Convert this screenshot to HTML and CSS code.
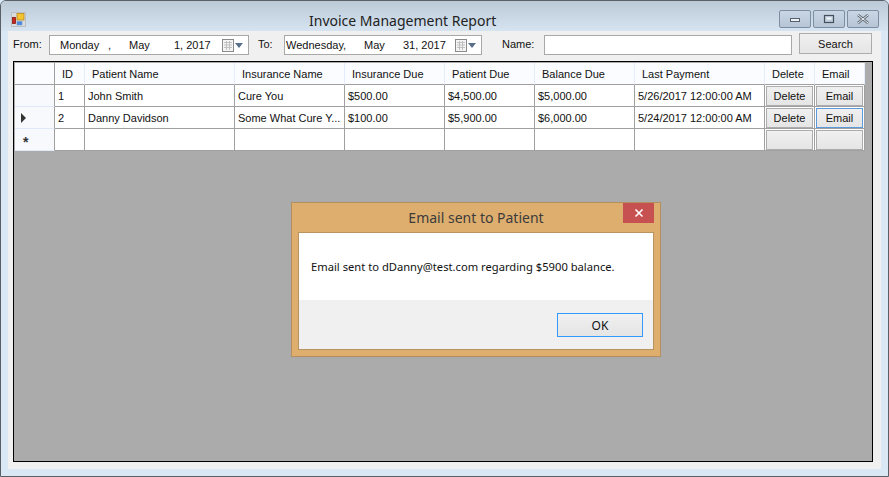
FILE: index.html
```html
<!DOCTYPE html>
<html lang="en">
<head>
    <meta charset="UTF-8">
    <title>Invoice Management Report</title>
    <link rel="stylesheet" href="styles.css">
</head>
<body>
    <div class="window">
        <div class="titlebar">
            <svg class="app-icon" width="15" height="15" viewBox="0 0 15 15">
                <rect x="0.5" y="0.5" width="14" height="14" fill="#d8dcdf" stroke="#bcc0c2"/>
                <rect x="1.5" y="5.5" width="3" height="6" fill="#c8261c" stroke="#8c1a14" stroke-width="0.8"/>
                <rect x="6" y="1.5" width="7" height="6.5" fill="#f4c430" stroke="#b88a18" stroke-width="0.8"/>
                <rect x="6" y="9.5" width="5" height="3.5" fill="#4a86dc" stroke="#6f9bd8" stroke-width="0.6"/>
            </svg>
            <div class="title">Invoice Management Report</div>
            <div class="caption-buttons">
                <div class="caption-btn">
                    <svg width="14" height="8" viewBox="0 0 14 8"><rect x="2.5" y="3.5" width="9" height="3" fill="#eef2f6" stroke="#56606c"/></svg>
                </div>
                <div class="caption-btn">
                    <svg width="12" height="10" viewBox="0 0 12 10"><rect x="1.5" y="1.5" width="9" height="7" fill="none" stroke="#46505c" stroke-width="1.2"/><rect x="3.5" y="3.5" width="5" height="2" fill="#f4f7fa"/></svg>
                </div>
                <div class="caption-btn caption-close">
                    <svg width="14" height="10" viewBox="0 0 14 10"><path d="M2 1 L12 9 M12 1 L2 9" stroke="#5c6670" stroke-width="2.6" fill="none"/><path d="M2 1 L12 9 M12 1 L2 9" stroke="#eef2f6" stroke-width="1" fill="none"/></svg>
                </div>
            </div>
        </div>

        <div class="client">
            <div class="toolbar">
                <label class="lbl lbl-from">From:</label>
                <div class="date-picker date-from">
                    <span class="dp-day">Monday</span>
                    <span class="dp-comma">,</span>
                    <span class="dp-month">May</span>
                    <span class="dp-year">1, 2017</span>
                    <svg class="cal" width="22" height="14" viewBox="0 0 22 14">
                        <rect x="0.5" y="0.5" width="11" height="12" fill="#f4f4f4" stroke="#8a8a8a"/>
                        <path d="M2 3.5H10M2 6H10M2 8.5H10M4.5 2V11M7.5 2V11" stroke="#c0c0c0" stroke-width="1" fill="none"/>
                        <path d="M13 4H21L17 9Z" fill="#5a6f8c"/>
                    </svg>
                </div>
                <label class="lbl lbl-to">To:</label>
                <div class="date-picker date-to">
                    <span class="dp-day">Wednesday,</span>
                    <span class="dp-month">May</span>
                    <span class="dp-year">31, 2017</span>
                    <svg class="cal" width="22" height="14" viewBox="0 0 22 14">
                        <rect x="0.5" y="0.5" width="11" height="12" fill="#f4f4f4" stroke="#8a8a8a"/>
                        <path d="M2 3.5H10M2 6H10M2 8.5H10M4.5 2V11M7.5 2V11" stroke="#c0c0c0" stroke-width="1" fill="none"/>
                        <path d="M13 4H21L17 9Z" fill="#5a6f8c"/>
                    </svg>
                </div>
                <label class="lbl lbl-name">Name:</label>
                <input class="name-input" type="text">
                <button class="btn search-btn" type="button">Search</button>
            </div>

            <div class="grid-view">
                <div class="grid-table">
                    <div class="row head-row">
                        <div class="row-head"></div>
                        <div class="cell">ID</div>
                        <div class="cell">Patient Name</div>
                        <div class="cell">Insurance Name</div>
                        <div class="cell">Insurance Due</div>
                        <div class="cell">Patient Due</div>
                        <div class="cell">Balance Due</div>
                        <div class="cell">Last Payment</div>
                        <div class="cell">Delete</div>
                        <div class="cell">Email</div>
                    </div>
                    <div class="row">
                        <div class="row-head"></div>
                        <div class="cell">1</div>
                        <div class="cell">John Smith</div>
                        <div class="cell">Cure You</div>
                        <div class="cell">$500.00</div>
                        <div class="cell">$4,500.00</div>
                        <div class="cell">$5,000.00</div>
                        <div class="cell">5/26/2017 12:00:00 AM</div>
                        <div class="cell btn-cell"><button class="btn" type="button">Delete</button></div>
                        <div class="cell btn-cell"><button class="btn" type="button">Email</button></div>
                    </div>
                    <div class="row">
                        <div class="row-head"><span class="arrow"></span></div>
                        <div class="cell">2</div>
                        <div class="cell">Danny Davidson</div>
                        <div class="cell">Some What Cure Y...</div>
                        <div class="cell">$100.00</div>
                        <div class="cell">$5,900.00</div>
                        <div class="cell">$6,000.00</div>
                        <div class="cell">5/24/2017 12:00:00 AM</div>
                        <div class="cell btn-cell"><button class="btn" type="button">Delete</button></div>
                        <div class="cell btn-cell"><button class="btn btn-focus" type="button">Email</button></div>
                    </div>
                    <div class="row">
                        <div class="row-head"><span class="star">*</span></div>
                        <div class="cell"></div>
                        <div class="cell"></div>
                        <div class="cell"></div>
                        <div class="cell"></div>
                        <div class="cell"></div>
                        <div class="cell"></div>
                        <div class="cell"></div>
                        <div class="cell btn-cell"><button class="btn" type="button"></button></div>
                        <div class="cell btn-cell"><button class="btn" type="button"></button></div>
                    </div>
                </div>
            </div>
        </div>

        <div class="dialog">
            <div class="dialog-title">
                <span>Email sent to Patient</span>
                <div class="dialog-close">
                    <svg width="10" height="10" viewBox="0 0 10 10"><path d="M1.5 1.5 L8.5 8.5 M8.5 1.5 L1.5 8.5" stroke="#fff" stroke-width="1.6" fill="none"/></svg>
                </div>
            </div>
            <div class="dialog-inner">
                <div class="dialog-msg">Email sent to dDanny@test.com regarding $5900 balance.</div>
                <div class="dialog-foot">
                    <button class="ok-btn" type="button">OK</button>
                </div>
            </div>
        </div>
    </div>
</body>
</html>
```

FILE: styles.css
```css
* {
    box-sizing: border-box;
    margin: 0;
    padding: 0;
}
html, body {
    width: 889px;
    height: 477px;
    overflow: hidden;
}
body {
    font-family: 'Liberation Sans', Arial, sans-serif;
    font-size: 11px;
    color: #111;
    background: #dae8f5;
}
.window {
    position: relative;
    width: 889px;
    height: 477px;
    display: flex;
    flex-direction: column;
    border: 1px solid #5a5f66;
    border-radius: 6px 6px 0 0;
    background: #dae8f5;
    padding: 0 7px 7px 7px;
}
.titlebar {
    height: 30px;
    margin: 0 -7px;
    padding: 0 9px 0 10px;
    display: flex;
    align-items: flex-start;
    background: linear-gradient(to bottom, #bccad8, #d6e4f2);
    border-radius: 5px 5px 0 0;
}
.app-icon {
    margin-top: 11px;
}
.title {
    position: absolute;
    left: 308px;
    top: 10px;
    font-family: 'Noto Sans', sans-serif;
    font-size: 14px;
    line-height: 20px;
    color: #222;
}
.caption-buttons {
    margin-left: auto;
    margin-top: 9px;
    display: flex;
    gap: 2px;
}
.caption-btn {
    width: 32px;
    height: 18px;
    border: 1px solid #7d8ea3;
    border-radius: 2px;
    background: linear-gradient(to bottom, #c9d6e4, #b6c5d6);
    display: flex;
    align-items: center;
    justify-content: center;
}
.client {
    flex: 1;
    display: flex;
    flex-direction: column;
    background: #f0f0f0;
    padding: 0 8px 7px 5px;
}
.toolbar {
    height: 30px;
    display: flex;
    align-items: flex-start;
    padding-top: 4px;
}
.lbl {
    line-height: 19px;
}
.lbl-from {
    width: 36px;
}
.lbl-to {
    margin-left: 9px;
    width: 26px;
}
.lbl-name {
    margin-left: 20px;
    width: 42px;
}
.date-picker {
    height: 20px;
    background: #fff;
    border: 1px solid #a8a8a8;
    line-height: 18px;
    position: relative;
    display: flex;
}
.date-from {
    width: 200px;
    padding-left: 10px;
}
.date-from .dp-day { width: 48px; }
.date-from .dp-comma { width: 21px; }
.date-from .dp-month { width: 45px; }
.date-from .dp-year { width: 48px; }
.date-to {
    width: 198px;
    padding-left: 1px;
}
.date-to .dp-day { width: 78px; }
.date-to .dp-month { width: 39px; }
.date-to .dp-year { width: 52px; }
.cal {
    margin-top: 3px;
}
.name-input {
    width: 248px;
    height: 20px;
    border: 1px solid #a8a8a8;
    background: #fff;
}
.btn {
    font-family: 'Liberation Sans', Arial, sans-serif;
    font-size: 11px;
    color: #111;
    border: 1px solid #acacac;
    background: linear-gradient(to bottom, #f0f0f0, #e5e5e5);
}
.search-btn {
    width: 73px;
    height: 21px;
    margin-left: 7px;
    margin-top: -2px;
}
.grid-view {
    flex: 1;
    border: 1px solid #000;
    background: #ababab;
    padding: 1px;
}
.row {
    display: grid;
    grid-template-columns: 40px 30px 150px 110px 100px 90px 100px 130px 50px 50px;
    width: 850px;
    height: 22px;
}
.head-row .row-head,
.head-row .cell {
    background: #fafcff;
    padding-left: 7px;
    border-right: 1px solid #e3edfb;
    border-bottom: 1px solid #a0a0a0;
}
.head-row .row-head {
    border-right: 1px solid #a0a0a0;
}
.row-head {
    background: #f7f9fd;
    border-right: 1px solid #a0a0a0;
    border-bottom: 1px solid #dfe9f8;
    display: flex;
    align-items: center;
    padding-left: 6px;
}
.cell {
    background: #fff;
    border-right: 1px solid #a0a0a0;
    border-bottom: 1px solid #a0a0a0;
    padding-left: 3px;
    padding-top: 1px;
    line-height: 21px;
    white-space: nowrap;
    overflow: hidden;
}
.btn-cell {
    padding: 1px;
}
.btn-cell .btn {
    display: block;
    width: 100%;
    height: 20px;
}
.btn-focus {
    border-color: #5b9bdc;
    border-width: 1px;
}
.arrow {
    width: 0;
    height: 0;
    border-left: 5px solid #333;
    border-top: 5px solid transparent;
    border-bottom: 5px solid transparent;
}
.star {
    font-size: 14px;
    font-weight: bold;
    line-height: 16px;
    padding-left: 2px;
    padding-top: 4px;
    color: #333;
}
.dialog {
    position: absolute;
    left: 290px;
    top: 201px;
    width: 370px;
    height: 155px;
    background: #deae6e;
    border: 1px solid #b28f5c;
    padding: 0 6px 6px;
    display: flex;
    flex-direction: column;
}
.dialog-title {
    height: 29px;
    position: relative;
    text-align: center;
    font-family: 'Noto Sans', sans-serif;
    font-size: 14px;
    line-height: 30px;
    color: #3c3c3c;
}
.dialog-close {
    position: absolute;
    right: 0;
    top: 0;
    width: 31px;
    height: 20px;
    background: #c75050;
    display: flex;
    align-items: center;
    justify-content: center;
}
.dialog-inner {
    flex: 1;
    border: 1px solid #b7935f;
    display: flex;
    flex-direction: column;
    background: #fff;
}
.dialog-msg {
    height: 67px;
    padding: 26px 0 0 12px;
    font-family: 'Noto Sans', sans-serif;
    font-size: 11.2px;
    line-height: 16px;
    color: #111;
}
.dialog-foot {
    flex: 1;
    background: #f0f0f0;
    display: flex;
    justify-content: flex-end;
    align-items: flex-start;
    padding: 13px 10px 0 0;
}
.ok-btn {
    width: 86px;
    height: 24px;
    font-family: 'Noto Sans', sans-serif;
    font-size: 12px;
    color: #111;
    border: 1px solid #3399ff;
    background: linear-gradient(to bottom, #f0f0f0, #e5e5e5);
}
```
